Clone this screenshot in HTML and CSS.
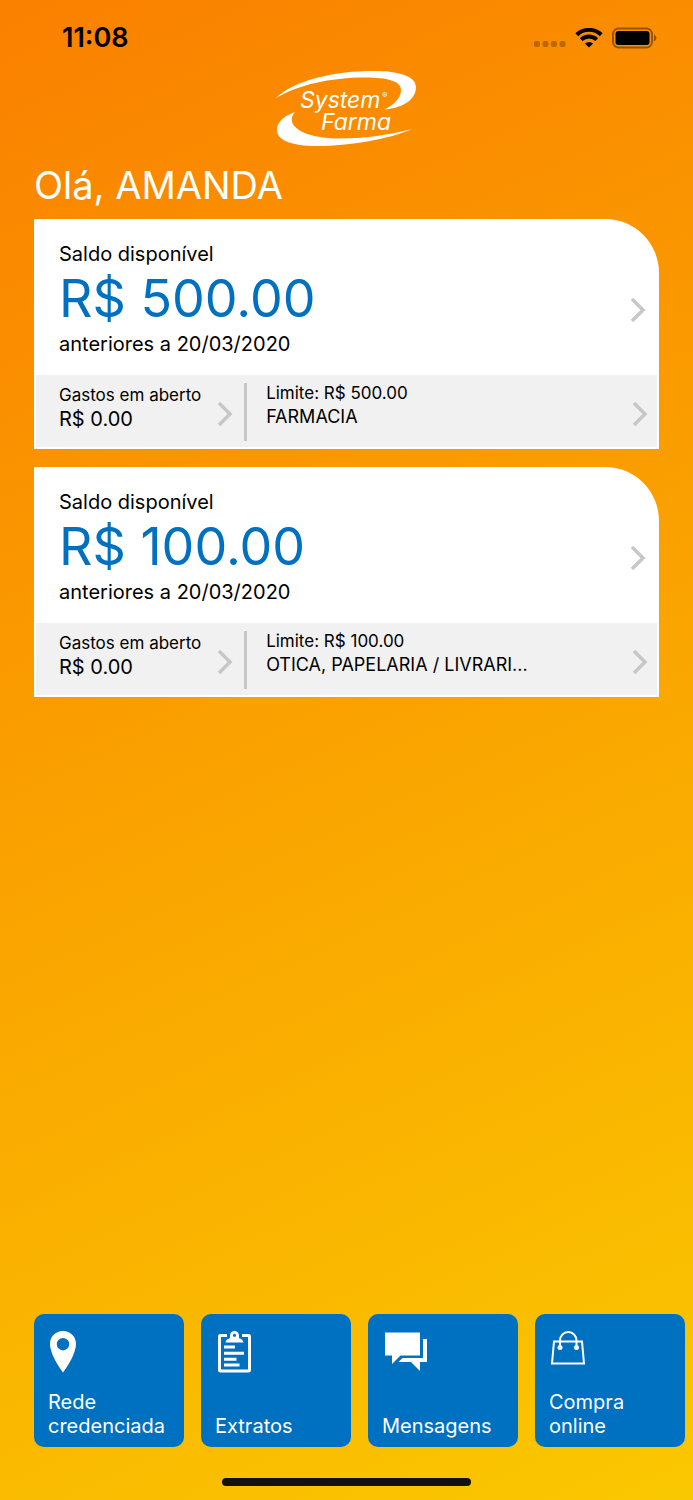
FILE: index.html
```html
<!DOCTYPE html>
<html lang="pt-BR">

<head>
    <meta charset="UTF-8">
    <meta name="viewport" content="width=device-width, initial-scale=1.0">
    <title>System Farma</title>
    <link rel="stylesheet" href="styles.css">
</head>

<body>
    <div class="status_bar">
        <span class="time">11:08</span>
        <div class="status_icons">
            <svg class="signal" width="32" height="8" viewBox="0 0 32 8">
                <rect x="0" y="1" width="6" height="6" rx="2" />
                <rect x="8.5" y="1" width="6" height="6" rx="2" />
                <rect x="17" y="1" width="6" height="6" rx="2" />
                <rect x="25.5" y="1" width="6" height="6" rx="2" />
            </svg>
            <svg class="wifi" width="28" height="20" viewBox="0 0 28 20">
                <path d="M1.8 6.8A17.4 17.4 0 0 1 26.2 6.8" />
                <path d="M6.3 11.6A11 11 0 0 1 21.7 11.6" />
                <path class="wifi_dot" d="M14 19.6L9.9 15.6Q14 12.2 18.1 15.6Z" />
            </svg>
            <svg class="battery" width="45" height="22" viewBox="0 0 45 22">
                <rect class="battery_case" x="1" y="1.5" width="39" height="19" rx="5.5" />
                <rect x="3.5" y="4" width="34" height="14" rx="3" />
                <path class="battery_tip" d="M42 7.5Q44.4 8.5 44.4 11T42 14.5Z" />
            </svg>
        </div>
    </div>

    <header class="header">
        <svg class="logo" width="144" height="78" viewBox="0 0 144 78" role="img" aria-label="System Farma">
            <path d="M0.5 28.5C20 9 62 1 98 1C126 1 141 7 141 17C141 29 129 38 109 39.5C119 35 126 28 126 20C126 11 112 7.5 91 7.5C55 7.5 22 15 0.5 28.5Z" />
            <path d="M20 42C6 47 2 54 2 60C2 70 16 76 42 76C75 76 115 69 137 59C112 65.500 88 68.500 64 68.500C34 68.500 14 59 17 47Q18 44 20 42Z" />
            <text class="logo_text" x="25" y="38">System</text>
            <text class="logo_reg" x="107" y="28">®</text>
            <text class="logo_text" x="46" y="60">Farma</text>
        </svg>
    </header>

    <main class="main">
        <h1 class="hello">Olá, AMANDA</h1>

        <section class="card">
            <a class="balance" href="#">
                <div>
                    <p class="label">Saldo disponível</p>
                    <p class="amount">R$ 500.00</p>
                    <p class="label">anteriores a 20/03/2020</p>
                </div>
                <svg class="chevron" width="16" height="26" viewBox="0 0 16 26"><path d="M2 2L13 13L2 24" /></svg>
            </a>
            <div class="details">
                <a class="spent" href="#">
                    <div>
                        <p class="small">Gastos em aberto</p>
                        <p class="value">R$ 0.00</p>
                    </div>
                    <svg class="chevron" width="16" height="26" viewBox="0 0 16 26"><path d="M2 2L13 13L2 24" /></svg>
                </a>
                <a class="limit" href="#">
                    <div class="limit_text">
                        <p class="small">Limite: R$ 500.00</p>
                        <p class="value">FARMACIA</p>
                    </div>
                    <svg class="chevron" width="16" height="26" viewBox="0 0 16 26"><path d="M2 2L13 13L2 24" /></svg>
                </a>
            </div>
        </section>

        <section class="card">
            <a class="balance" href="#">
                <div>
                    <p class="label">Saldo disponível</p>
                    <p class="amount">R$ 100.00</p>
                    <p class="label">anteriores a 20/03/2020</p>
                </div>
                <svg class="chevron" width="16" height="26" viewBox="0 0 16 26"><path d="M2 2L13 13L2 24" /></svg>
            </a>
            <div class="details">
                <a class="spent" href="#">
                    <div>
                        <p class="small">Gastos em aberto</p>
                        <p class="value">R$ 0.00</p>
                    </div>
                    <svg class="chevron" width="16" height="26" viewBox="0 0 16 26"><path d="M2 2L13 13L2 24" /></svg>
                </a>
                <a class="limit" href="#">
                    <div class="limit_text">
                        <p class="small">Limite: R$ 100.00</p>
                        <p class="value">OTICA, PAPELARIA / LIVRARI...</p>
                    </div>
                    <svg class="chevron" width="16" height="26" viewBox="0 0 16 26"><path d="M2 2L13 13L2 24" /></svg>
                </a>
            </div>
        </section>
    </main>

    <nav class="menu">
        <a class="tile" href="#">
            <svg width="44" height="44" viewBox="0 0 44 44">
                <path fill-rule="evenodd" d="M15 1C22.500 1 28 6.500 28 14C28 23 20 36 15 42.500C10 36 2 23 2 14C2 6.500 7.500 1 15 1ZM15 8A6.200 6.200 0 1 0 15 20.400A6.200 6.200 0 1 0 15 8Z" />
            </svg>
            <span>Rede credenciada</span>
        </a>
        <a class="tile" href="#">
            <svg width="44" height="44" viewBox="0 0 44 44">
                <path class="line" d="M12 5.500H5.500Q4.500 5.500 4.500 6.500V40Q4.500 41 5.500 41H33.500Q34.500 41 34.500 40V6.500Q34.500 5.500 33.500 5.500H27" />
                <path fill-rule="evenodd" d="M10.500 12.500Q10.800 9 15 8.300V5.500A4.500 4.500 0 0 1 24 5.500V8.300Q28 9 28.500 12.500ZM19.500 3.700A1.600 1.600 0 1 0 19.500 6.900A1.600 1.600 0 1 0 19.500 3.700Z" />
                <path d="M9 15.500H20V18.500H9ZM9 21.700H29V24.700H9ZM9 27.800H21.500V30.800H9ZM9 33.600H24.500V36.600H9Z" />
            </svg>
            <span>Extratos</span>
        </a>
        <a class="tile" href="#">
            <svg width="44" height="44" viewBox="0 0 44 44">
                <path d="M3 2.500H38V25.500H18.500L10 34V25.500H3Z" />
                <path d="M41 9H45V32H38V41L29 32H16.500L20.500 28H41Z" />
            </svg>
            <span>Mensagens</span>
        </a>
        <a class="tile" href="#">
            <svg width="44" height="44" viewBox="0 0 44 44">
                <path class="line thin" d="M5 11.500H33L35 33.500H3Z" />
                <path class="line thin" d="M11 17V10.500A8.200 8.500 0 0 1 27.500 10.500V17" />
                <circle cx="11" cy="17.500" r="2.500" />
                <circle cx="27.500" cy="17.500" r="2.500" />
            </svg>
            <span>Compra online</span>
        </a>
    </nav>

    <div class="home_bar"></div>
</body>

</html>
```

FILE: styles.css
```css
* {
    margin: 0;
    padding: 0;
    box-sizing: border-box;
}

body {
    display: flex;
    flex-direction: column;
    min-height: 100vh;
    font-family: Inter, "Liberation Sans", sans-serif;
    color: #000;
    background: linear-gradient(155deg, #fa8000 0%, #faa000 45%, #fac800 100%);
}

a {
    color: inherit;
    text-decoration: none;
}

.status_bar {
    display: flex;
    justify-content: space-between;
    align-items: center;
    padding: 22px 36px 0 62px;
}

.time {
    font-size: 27px;
    line-height: 32px;
    font-weight: 600;
}

.status_icons {
    display: flex;
    align-items: center;
    gap: 9px;
}

.signal {
    opacity: 0.25;
    margin-top: 12px;
}

.wifi {
    fill: none;
    stroke: #000;
    stroke-width: 4;
}

.wifi .wifi_dot {
    fill: #000;
    stroke: none;
}

.battery_case {
    fill: none;
    stroke: #000;
    stroke-width: 2;
    opacity: 0.4;
}

.battery_tip {
    opacity: 0.4;
}

.header {
    display: flex;
    justify-content: center;
    padding-top: 16px;
}

.logo {
    fill: #fff;
}

.logo_text {
    font-family: Inter, sans-serif;
    font-size: 23px;
    font-style: italic;
}

.logo_reg {
    font-family: Inter, sans-serif;
    font-size: 8px;
}

.main {
    flex: 1;
    display: flex;
    flex-direction: column;
    gap: 18px;
    padding: 13px 34px 0;
}

.hello {
    font-size: 38px;
    line-height: 48px;
    font-weight: 400;
    color: #fff;
    margin-bottom: -8px;
}

.card {
    padding-bottom: 2px;
    background: #fff;
    border-top-right-radius: 54px;
}

.balance {
    display: flex;
    justify-content: space-between;
    align-items: center;
    padding: 22px 13px 18px 25px;
}

.balance .chevron {
    margin-top: 22px;
}

.label {
    font-size: 20px;
    line-height: 26px;
}

.amount {
    font-size: 52px;
    line-height: 64px;
    color: #0070c0;
}

.chevron {
    flex: none;
    fill: none;
    stroke: #c7c7c7;
    stroke-width: 3.5;
}

.details {
    display: flex;
    margin: 0 2px;
    padding: 8px 0 6px;
    background: #f1f1f1;
}

.spent {
    width: 34%;
    display: flex;
    justify-content: space-between;
    padding: 0 11px 10px 23px;
    border-right: 3px solid #c7c7c7;
}

.limit {
    flex: 1;
    display: flex;
    justify-content: space-between;
    min-width: 0;
    padding: 0 9px 0 19px;
}

.spent .chevron,
.limit .chevron {
    margin-top: 18px;
}

.limit_text {
    min-width: 0;
    margin-top: -2px;
}

.small {
    font-size: 17px;
    line-height: 24px;
}

.value {
    font-size: 18px;
    line-height: 24px;
    white-space: nowrap;
    overflow: hidden;
    text-overflow: ellipsis;
}

.spent .value {
    font-size: 20px;
}

.menu {
    display: flex;
    gap: 17px;
    padding: 0 34px;
    overflow-x: auto;
    scrollbar-width: none;
}

.tile {
    flex: none;
    display: flex;
    flex-direction: column;
    justify-content: space-between;
    width: 150px;
    min-height: 133px;
    padding: 16px 14px 9px;
    border-radius: 10px;
    font-size: 20px;
    line-height: 24px;
    color: #fff;
    background: #0070c0;
}

.tile svg {
    fill: #fff;
    overflow: visible;
}

.tile .line {
    fill: none;
    stroke: #fff;
    stroke-width: 3;
}

.tile .thin {
    stroke-width: 2;
}

.home_bar {
    width: 36%;
    height: 8px;
    margin: 31px auto 14px;
    border-radius: 4px;
    background: #111;
}
```
